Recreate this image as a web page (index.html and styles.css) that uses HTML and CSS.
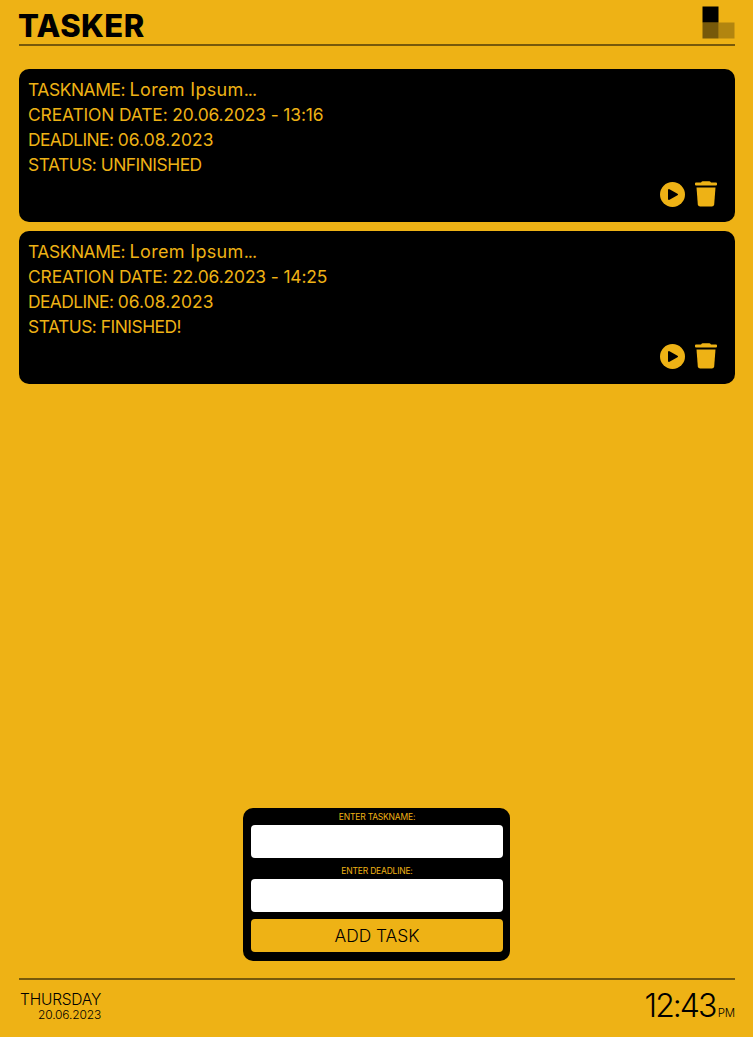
FILE: index.html
```html
<!DOCTYPE html>
<html lang="en">
<head>
<meta charset="utf-8">
<title>Tasker</title>
<link rel="stylesheet" href="styles.css">
</head>
<body>
<header class="header">
  <h1 class="brand">TASKER</h1>
  <svg class="logo" width="33" height="33" viewBox="0 0 33 33"><path d="M.5.5h16v16H.5z"/><path d="M.5 16.5h16v16H.5z" opacity=".5"/><path d="M16.5 16.5h16v16h-16z" opacity=".25"/></svg>
</header>
<main class="tasks">
  <article class="card">
    <p class="line"><span class="key-name">TASKNAME: </span><span class="name">Lorem Ipsum<span class="dots">...</span></span></p>
    <p class="line created">CREATION DATE: 20.06.2023 - 13:16</p>
    <p class="line"><span class="key-deadline">DEADLINE: </span><span class="deadline">06.08.2023</span></p>
    <p class="line status">STATUS: UNFINISHED</p>
    <div class="actions">
      <svg width="26" height="27" viewBox="0 0 26 27"><circle cx="13.5" cy="13.5" r="12.5" fill="#eeb215"/><path d="M10 9v9l8-4.500z" stroke="#000" stroke-width="2" stroke-linejoin="round"/></svg>
      <svg width="22" height="27" viewBox="0 0 22 27" fill="#eeb215"><path d="M6 1.400Q6.800.3 7.800.3h6.400q1 0 1.800 1.100H21q1 0 1 1v1.200q0 1-1 1H1q-1 0-1-1V2.400q0-1 1-1z"/><path d="M1.500 6.500h19l-1.300 16.800q-.2 2.300-2.400 2.300H5.200q-2.200 0-2.400-2.300z"/></svg>
    </div>
  </article>
  <article class="card">
    <p class="line"><span class="key-name">TASKNAME: </span><span class="name">Lorem Ipsum<span class="dots">...</span></span></p>
    <p class="line created">CREATION DATE: 22.06.2023 - 14:25</p>
    <p class="line"><span class="key-deadline">DEADLINE: </span><span class="deadline">06.08.2023</span></p>
    <p class="line status">STATUS: FINISHED!</p>
    <div class="actions">
      <svg width="26" height="27" viewBox="0 0 26 27"><circle cx="13.5" cy="13.5" r="12.5" fill="#eeb215"/><path d="M10 9v9l8-4.500z" stroke="#000" stroke-width="2" stroke-linejoin="round"/></svg>
      <svg width="22" height="27" viewBox="0 0 22 27" fill="#eeb215"><path d="M6 1.400Q6.800.3 7.800.3h6.400q1 0 1.800 1.100H21q1 0 1 1v1.200q0 1-1 1H1q-1 0-1-1V2.400q0-1 1-1z"/><path d="M1.500 6.500h19l-1.300 16.800q-.2 2.300-2.400 2.300H5.200q-2.200 0-2.400-2.300z"/></svg>
    </div>
  </article>
</main>
<form class="form">
  <label class="label" for="task">ENTER TASKNAME:</label>
  <input class="field" id="task" type="text">
  <label class="label second" for="due">ENTER DEADLINE:</label>
  <input class="field" id="due" type="text">
  <button class="add" type="button">ADD TASK</button>
</form>
<footer class="footer">
  <div class="today"><div class="day">THURSDAY</div><div class="date">20.06.2023</div></div>
  <div class="clock"><span class="time">12:43</span><span class="pm">PM</span></div>
</footer>
</body>
</html>
```
FILE: styles.css
```css
* { box-sizing: border-box; }
body {
  margin: 0;
  height: 1037px;
  padding: 0 18px 0 19px;
  background: #eeb215;
  color: #000;
  font-family: Inter, "Liberation Sans", sans-serif;
  display: flex;
  flex-direction: column;
}
.header {
  height: 46px;
  padding-top: 6px;
  border-bottom: 2px solid #77590b;
  display: flex;
  justify-content: space-between;
}
.brand { margin: 0 0 0 -1px; font-size: 31px; line-height: 40px; font-weight: 800; letter-spacing: .4px; }
.logo { display: block; }
.tasks { margin-top: 23px; display: flex; flex-direction: column; gap: 9px; }
.card {
  height: 153px;
  padding: 8px 18px 0 9px;
  border-radius: 10px;
  background: #000;
  color: #eeb215;
}
.line { margin: 0; height: 25px; font-size: 17.4px; line-height: 25px; font-weight: 400; white-space: nowrap; }
.key-name { letter-spacing: -.42px; }
.name { font-size: 18px; letter-spacing: .32px; }
.dots { letter-spacing: -1px; }
.created { letter-spacing: -.12px; }
.key-deadline { letter-spacing: -.58px; }
.deadline { letter-spacing: .08px; }
.status { letter-spacing: -.49px; }
.actions { display: flex; justify-content: flex-end; gap: 10px; margin-top: 4px; }
.actions svg { display: block; }
.form {
  width: 267px;
  height: 153px;
  margin: auto auto 17px 224px;
  padding: 4px 7px 0 8px;
  border-radius: 10px;
  background: #000;
  display: flex;
  flex-direction: column;
}
.label { height: 13px; line-height: 11px; font-size: 8.5px; letter-spacing: -.2px; text-align: center; color: #eeb215; }
.second { margin-top: 8px; }
.field { height: 33px; border: 0; border-radius: 4px; background: #fff; padding: 0 8px; font: inherit; }
.add { height: 33px; margin-top: 7px; padding: 0; border: 0; border-radius: 4px; background: #eeb215; color: #000; font-family: inherit; font-size: 17.4px; font-weight: 300; }
.footer {
  height: 59px;
  border-top: 2px solid #77590b;
  display: flex;
  justify-content: space-between;
}
.today { padding: 10px 0 0 1px; text-align: right; }
.day { font-size: 15.5px; line-height: 19px; font-weight: 300; letter-spacing: -.2px; }
.date { font-size: 12px; line-height: 12px; font-weight: 300; letter-spacing: -.15px; }
.clock { display: flex; align-items: baseline; height: 40px; padding-top: 6px; }
.time { font-size: 32px; line-height: 40px; font-weight: 300; letter-spacing: -2px; margin-right: 2.500px; }
.pm { font-size: 11.5px; font-weight: 300; letter-spacing: -.2px; }
```
